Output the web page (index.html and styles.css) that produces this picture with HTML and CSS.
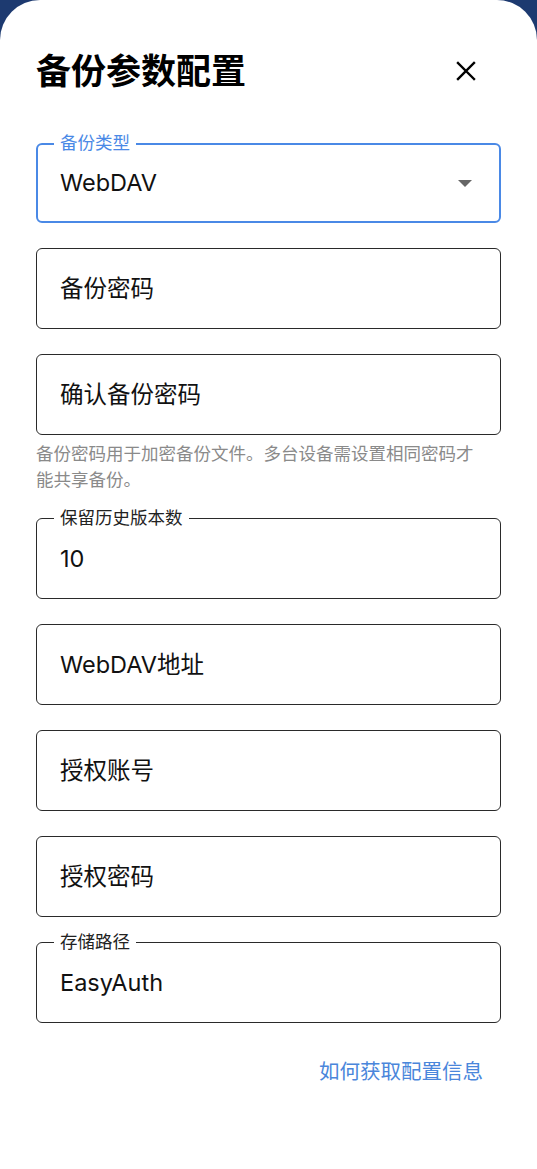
FILE: index.html
```html
<!DOCTYPE html>
<html lang="zh-CN">
<head>
<meta charset="utf-8">
<title>备份参数配置</title>
<link rel="stylesheet" href="styles.css">
</head>
<body>
<div class="sheet">
  <header class="header">
    <h1 class="title">备份参数配置</h1>
    <button class="close" aria-label="关闭">
      <svg width="20" height="20" viewBox="0 0 20 20"><path d="M2 2 L18 18 M18 2 L2 18" stroke="#000" stroke-width="2.4" stroke-linecap="square" fill="none"/></svg>
    </button>
  </header>

  <div class="form">
    <div class="field field-active">
      <span class="field-label label-active">备份类型</span>
      <span class="value">WebDAV</span>
      <span class="caret"></span>
    </div>

    <div class="field">
      <span class="value">备份密码</span>
    </div>

    <div class="group">
      <div class="field">
        <span class="value">确认备份密码</span>
      </div>
      <p class="helper">备份密码用于加密备份文件。多台设备需设置相同密码才能共享备份。</p>
    </div>

    <div class="field">
      <span class="field-label">保留历史版本数</span>
      <span class="value">10</span>
    </div>

    <div class="field">
      <span class="value">WebDAV地址</span>
    </div>

    <div class="field">
      <span class="value">授权账号</span>
    </div>

    <div class="field">
      <span class="value">授权密码</span>
    </div>

    <div class="field">
      <span class="field-label">存储路径</span>
      <span class="value">EasyAuth</span>
    </div>
  </div>

  <div class="link-row">
    <a class="link" href="#">如何获取配置信息</a>
  </div>
</div>
</body>
</html>
```

FILE: styles.css
```css
* { box-sizing: border-box; }

html, body {
  margin: 0;
  padding: 0;
  height: 100%;
}

body {
  background: #1d3a70;
  font-family: Inter, "Noto Sans CJK SC", sans-serif;
  color: #111;
}

.sheet {
  background: #fff;
  border-radius: 40px 40px 0 0;
  min-height: 1169px;
  padding: 48px 36px 0 36px;
}

.header {
  display: flex;
  align-items: center;
  justify-content: space-between;
  height: 46px;
}

.title {
  margin: 0;
  font-size: 35px;
  line-height: 46px;
  font-weight: 700;
  color: #000;
}

.close {
  border: 0;
  background: none;
  padding: 0;
  margin-right: 25px;
  width: 20px;
  height: 20px;
  display: flex;
}

.form {
  margin-top: 49px;
  display: flex;
  flex-direction: column;
  gap: 25px;
}

.group {
  display: flex;
  flex-direction: column;
}

.field {
  position: relative;
  height: 81px;
  border: 1.3px solid #2a2a2a;
  border-radius: 6px;
  display: flex;
  align-items: center;
  justify-content: space-between;
  padding: 0 27px 0 23px;
}

.field-active {
  height: 80px;
  border: 2px solid #4a89e6;
  padding-left: 22px;
}

.field-label {
  position: absolute;
  top: -11px;
  left: 17px;
  padding: 0 6px;
  background: #fff;
  font-size: 17.5px;
  line-height: 20px;
  color: #222;
}

.label-active {
  left: 16px;
  top: -12px;
  color: #4a89e6;
}

.value {
  font-size: 23.5px;
  line-height: 30px;
  color: #111;
}

.caret {
  width: 0;
  height: 0;
  border-left: 7px solid transparent;
  border-right: 7px solid transparent;
  border-top: 7px solid #666;
}

.helper {
  margin: 6px 0 0 0;
  font-size: 17.5px;
  line-height: 26px;
  color: #8a8a8a;
  padding-right: 24px;
}

.link-row {
  display: flex;
  justify-content: flex-end;
  margin-top: 34px;
  padding-right: 18px;
}

.link {
  font-size: 20.5px;
  line-height: 30px;
  color: #4a86db;
  text-decoration: none;
}
```
